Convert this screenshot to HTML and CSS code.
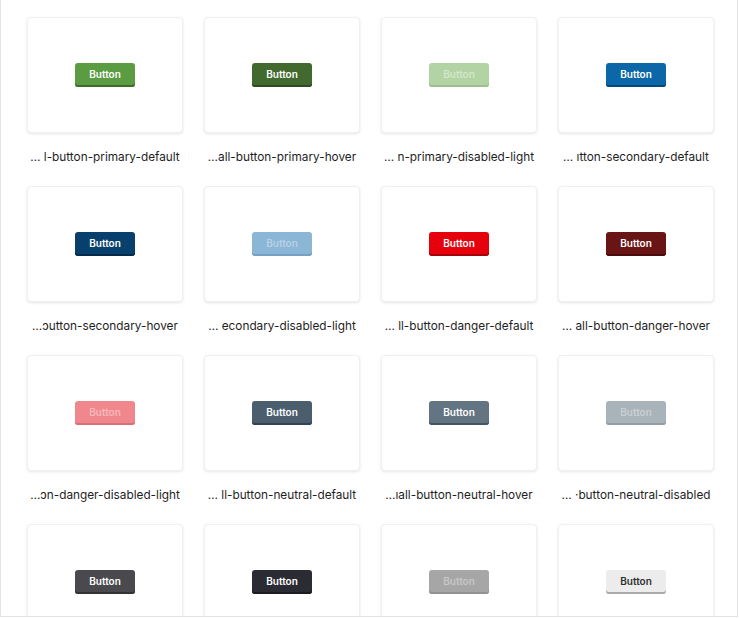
FILE: index.html
```html
<!DOCTYPE html>
<html>
<head>
<meta charset="utf-8">
<link rel="stylesheet" href="styles.css">
</head>
<body>
<div class="frame">
  <div class="grid">
    <div class="item"><div class="card"><span class="btn b1">Button</span></div><div class="label">… l-button-primary-default</div></div>
    <div class="item"><div class="card"><span class="btn b2">Button</span></div><div class="label">…all-button-primary-hover</div></div>
    <div class="item"><div class="card"><span class="btn b3">Button</span></div><div class="label">… n-primary-disabled-light</div></div>
    <div class="item"><div class="card"><span class="btn b4">Button</span></div><div class="label">… ıtton-secondary-default</div></div>

    <div class="item"><div class="card"><span class="btn b5">Button</span></div><div class="label">…ɔutton-secondary-hover</div></div>
    <div class="item"><div class="card"><span class="btn b6">Button</span></div><div class="label">… econdary-disabled-light</div></div>
    <div class="item"><div class="card"><span class="btn b7">Button</span></div><div class="label">… ll-button-danger-default</div></div>
    <div class="item"><div class="card"><span class="btn b8">Button</span></div><div class="label">… all-button-danger-hover</div></div>

    <div class="item"><div class="card"><span class="btn b9">Button</span></div><div class="label">…ɔn-danger-disabled-light</div></div>
    <div class="item"><div class="card"><span class="btn b10">Button</span></div><div class="label">… ll-button-neutral-default</div></div>
    <div class="item"><div class="card"><span class="btn b11">Button</span></div><div class="label">…ıall-button-neutral-hover</div></div>
    <div class="item"><div class="card"><span class="btn b12">Button</span></div><div class="label">… ·button-neutral-disabled</div></div>

    <div class="item"><div class="card"><span class="btn b13">Button</span></div></div>
    <div class="item"><div class="card"><span class="btn b14">Button</span></div></div>
    <div class="item"><div class="card"><span class="btn b15">Button</span></div></div>
    <div class="item"><div class="card"><span class="btn b16">Button</span></div></div>
  </div>
</div>
</body>
</html>
```

FILE: styles.css
```css
* { box-sizing: border-box; }
html, body {
  margin: 0;
  padding: 0;
  background: #ffffff;
}
body {
  font-family: Inter, "Noto Sans", sans-serif;
}
.frame {
  width: 738px;
  height: 617px;
  border-left: 1px solid #e3e3e3;
  border-right: 1px solid #e3e3e3;
  border-bottom: 1px solid #e3e3e3;
  overflow: hidden;
  background: #ffffff;
}
.grid {
  display: grid;
  grid-template-columns: repeat(4, 156px);
  column-gap: 21px;
  row-gap: 20px;
  padding: 17px 0 0 26px;
}
.item {
  display: flex;
  flex-direction: column;
}
.card {
  height: 116px;
  background: #fff;
  border: 1px solid #f0f0f0;
  border-radius: 4px;
  box-shadow: 0 1px 3px rgba(0,0,0,0.10);
  display: flex;
  align-items: center;
  justify-content: center;
}
.label {
  margin-top: 15px;
  height: 18px;
  line-height: 18px;
  font-size: 11.8px;
  color: #1e1e1e;
  text-align: center;
  white-space: nowrap;
}
.btn {
  width: 60px;
  height: 24px;
  border-radius: 3px;
  font-size: 10px;
  font-weight: 600;
  color: #fff;
  display: flex;
  align-items: center;
  justify-content: center;
  padding-bottom: 2px;
}
.b1 { background: #5b9b41; box-shadow: inset 0 -2px 0 #3e6d2b; }
.b2 { background: #426a2f; box-shadow: inset 0 -2px 0 #2e4c20; }
.b3 { background: #b2d3a3; box-shadow: inset 0 -2px 0 #9dbf8e; color: #d3e7ca; }
.b4 { background: #0b67a7; box-shadow: inset 0 -2px 0 #07487a; }
.b5 { background: #07406d; box-shadow: inset 0 -2px 0 #042b4b; }
.b6 { background: #8bb6d6; box-shadow: inset 0 -2px 0 #76a1c2; color: #b8d1e6; }
.b7 { background: #e6020c; box-shadow: inset 0 -2px 0 #a8030a; }
.b8 { background: #6a1515; box-shadow: inset 0 -2px 0 #4a0d0d; }
.b9 { background: #f0878d; box-shadow: inset 0 -2px 0 #d97278; color: #f7b8bc; }
.b10 { background: #4a5e6d; box-shadow: inset 0 -2px 0 #33434f; }
.b11 { background: #637482; box-shadow: inset 0 -2px 0 #46545f; }
.b12 { background: #a8b3ba; box-shadow: inset 0 -2px 0 #939ea6; color: #c9d1d6; }
.b13 { background: #4a4a4e; box-shadow: inset 0 -2px 0 #333336; }
.b14 { background: #2b2c33; box-shadow: inset 0 -2px 0 #1b1c21; }
.b15 { background: #a6a6a6; box-shadow: inset 0 -2px 0 #929292; color: #c6c6c6; }
.b16 { background: #ececec; box-shadow: inset 0 -2px 0 #a9a9a9; color: #2f2f2f; }
```
